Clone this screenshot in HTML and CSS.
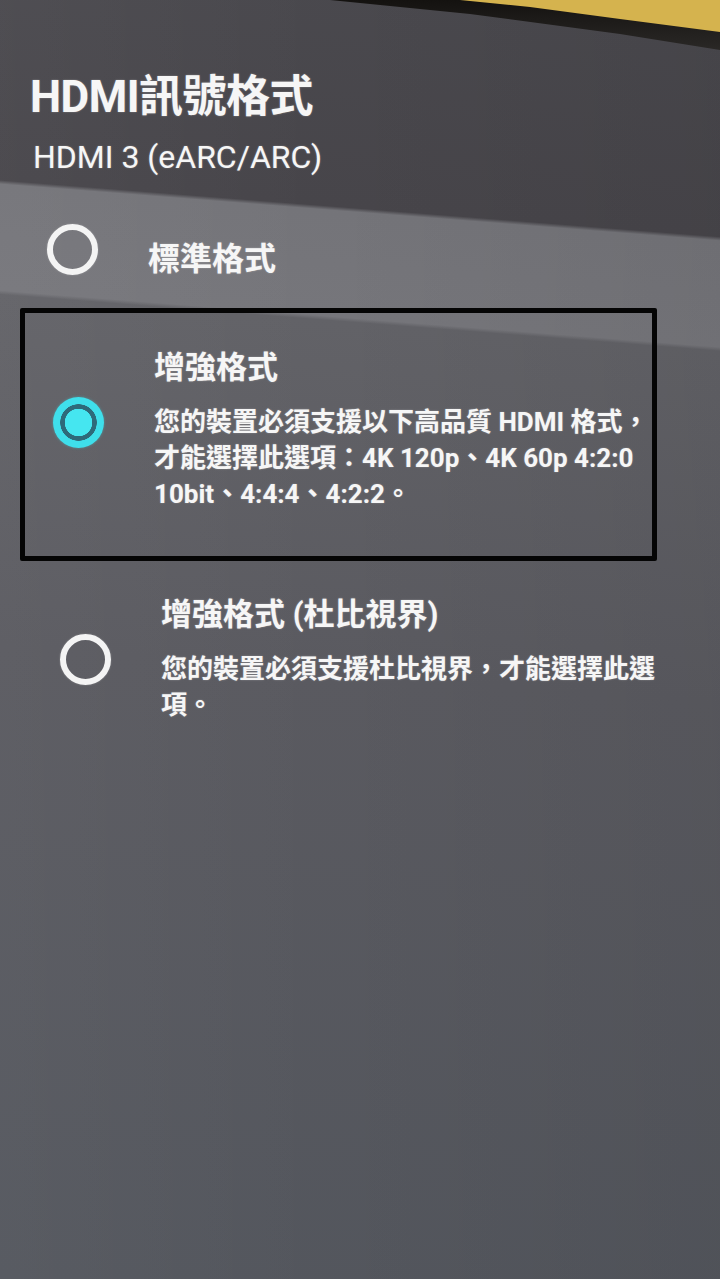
FILE: index.html
```html
<!DOCTYPE html>
<html lang="zh-Hant">
<head>
<meta charset="utf-8">
<title>HDMI訊號格式</title>
<link rel="stylesheet" href="styles.css">
</head>
<body>
<div class="screen">
  <header class="head">
    <h1 class="title">HDMI訊號格式</h1>
    <p class="subtitle">HDMI 3 (eARC/ARC)</p>
  </header>
  <ul class="options">
    <li class="opt opt-focus">
      <span class="radio"></span>
      <div class="label label-plain"><div class="name name-plain">標準格式</div></div>
    </li>
    <li class="opt opt-boxed">
      <span class="radio radio-on"></span>
      <div class="label">
        <div class="name">增強格式</div>
        <div class="desc">您的裝置必須支援以下高品質 HDMI 格式，<br>才能選擇此選項：4K 120p、4K 60p 4:2:0<br>10bit、4:4:4、4:2:2。</div>
      </div>
    </li>
    <li class="opt opt-last">
      <span class="radio"></span>
      <div class="label">
        <div class="name">增強格式 (杜比視界)</div>
        <div class="desc">您的裝置必須支援杜比視界，才能選擇此選<br>項。</div>
      </div>
    </li>
  </ul>
  <svg class="bezel" width="400" height="60" viewBox="0 0 400 60">
    <defs>
      <linearGradient id="bz" x1="0" y1="0" x2="0" y2="1">
        <stop offset="0" stop-color="#141210"/>
        <stop offset="1" stop-color="#2a2826"/>
      </linearGradient>
    </defs>
    <polygon points="10,0 400,0 400,50 300,34 150,14" fill="url(#bz)"/>
    <polygon points="140,0 400,0 400,32 300,19 210,7" fill="#d5b34e"/>
  </svg>
</div>
</body>
</html>
```
FILE: styles.css
```css
* { box-sizing: border-box; }
html, body { margin: 0; padding: 0; }
body { background: #56575d; }

.screen {
  position: relative;
  width: 720px;
  height: 1279px;
  overflow: hidden;
  font-family: Roboto, "Noto Sans CJK TC", sans-serif;
  color: #f6f6f6;
  background:
    linear-gradient(90deg, rgba(255,255,255,0.03) 0%, rgba(0,0,0,0) 45%, rgba(0,0,0,0.05) 100%),
    linear-gradient(184.5deg,
      #4a494e 0px, #47454a 236px,
      #747479 240px, #76767b 346px,
      #626267 350px, #5a5a60 700px, #53565d 1331px);
}

.head {
  height: 183px;
  padding: 71px 0 0 30px;
}
.title {
  margin: 0;
  font-size: 44px;
  line-height: 52px;
  font-weight: 700;
  letter-spacing: -0.5px;
  text-shadow: 0 0 2px rgba(255,255,255,0.35);
}
.subtitle {
  margin: 14px 0 0 3px;
  font-size: 32px;
  line-height: 40px;
  font-weight: 400;
  text-shadow: 0 0 2px rgba(255,255,255,0.3);
}

.options {
  list-style: none;
  margin: 0;
  padding: 0;
}
.opt {
  display: flex;
  align-items: center;
  gap: 50px;
  padding-left: 52px;
}
.opt-focus {
  height: 117px;
  padding-top: 16px;
  padding-left: 47px;
}
.label-plain { margin-top: 18px; }
.opt-boxed {
  margin: 8px 63px 0 20px;
  height: 253px;
  border: 5px solid #050505;
  border-radius: 2px;
  padding: 32px 0 42px 28px;
}
.opt-boxed .radio { margin-bottom: 14px; }
.opt-last {
  padding-top: 34px;
  padding-left: 60px;
}

.radio {
  flex: none;
  width: 51px;
  height: 51px;
  border-radius: 50%;
  border: 6.5px solid #f4f4f4;
  box-shadow: 0 0 2px rgba(255,255,255,0.3);
}
.radio-on {
  border: none;
  background: radial-gradient(circle, #45e6f0 0 13.5px, #2e6a7a 14px 18px, #3fdfeb 18.5px 25.5px);
  box-shadow: 0 0 3px rgba(64,224,236,0.4);
}

.name {
  font-size: 31px;
  line-height: 40px;
  font-weight: 700;
  text-shadow: 0 0 2px rgba(255,255,255,0.35);
}
.name-plain {
  font-size: 32px;
  font-weight: 700;
}
.desc {
  margin-top: 16px;
  font-size: 26px;
  line-height: 36px;
  font-weight: 700;
  text-shadow: 0 0 2px rgba(255,255,255,0.3);
}

.bezel {
  position: absolute;
  top: 0;
  right: 0;
}
```
